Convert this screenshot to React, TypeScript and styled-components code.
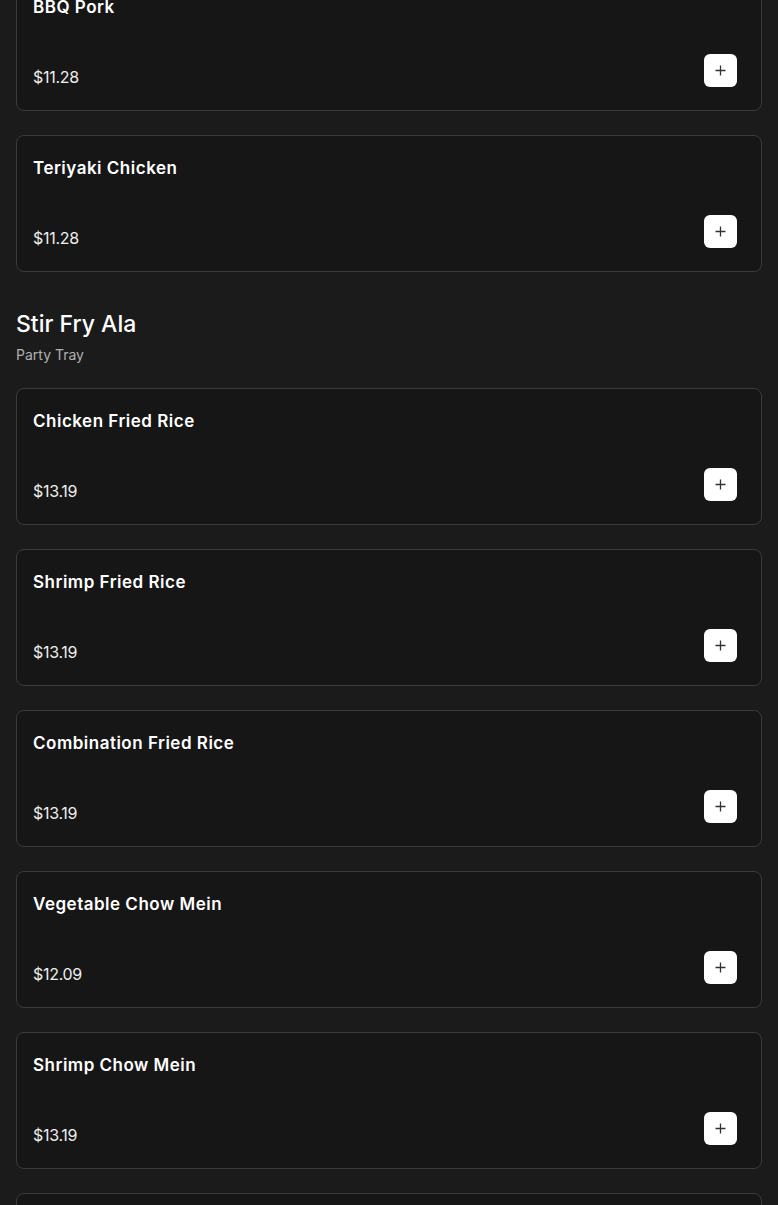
import React from "react";
import styled, { createGlobalStyle } from "styled-components";

const Global = createGlobalStyle`
  html, body { margin: 0; padding: 0; background: #1b1b1b; }
  body { font-family: "Inter", "Noto Sans", sans-serif; color: #fff; overflow: hidden; }
`;

const Page = styled.div`
  padding: 0 16px;
  display: flex;
  flex-direction: column;
  gap: 24px;
  margin-top: -26px;
`;

const Card = styled.div`
  background: #161616;
  border: 1px solid #3b3b3b;
  border-radius: 8px;
  padding: 16px 24px 23px 16px;
  display: flex;
  flex-direction: column;
`;

const Title = styled.div`
  font-size: 17px;
  font-weight: 600;
  line-height: 24px;
  letter-spacing: 0.5px;
  margin-top: 4px;
  color: #fff;
`;

const Row = styled.div`
  margin-top: 35px;
  display: flex;
  align-items: flex-end;
  justify-content: space-between;
`;

const Price = styled.div`
  font-size: 16px;
  line-height: 19px;
  letter-spacing: -0.3px;
  color: #eee;
`;

const AddButton = styled.button`
  width: 33px;
  height: 33px;
  border: none;
  border-radius: 6px;
  background: #fff;
  display: flex;
  align-items: center;
  justify-content: center;
  padding: 0;
  cursor: pointer;
`;

const Section = styled.div`
  padding-top: 12px;
  display: flex;
  flex-direction: column;
`;

const SectionTitle = styled.div`
  font-size: 23px;
  line-height: 32px;
  font-weight: 500;
  color: #fff;
`;

const SectionSub = styled.div`
  font-size: 14px;
  line-height: 19px;
  margin-top: 5px;
  color: #b0b0b0;
`;

const Plus = () => (
  <svg width="11" height="11" viewBox="0 0 11 11">
    <path d="M5.5 0.5v10M0.5 5.5h10" stroke="#333" strokeWidth="1.3" />
  </svg>
);

const Item = ({ name, price }: { name: string; price: string }) => (
  <Card>
    <Title>{name}</Title>
    <Row>
      <Price>{price}</Price>
      <AddButton aria-label="add">
        <Plus />
      </AddButton>
    </Row>
  </Card>
);

export default function App() {
  return (
    <>
      <Global />
      <Page>
        <Item name="BBQ Pork" price="$11.28" />
        <Item name="Teriyaki Chicken" price="$11.28" />
        <Section>
          <SectionTitle>Stir Fry Ala</SectionTitle>
          <SectionSub>Party Tray</SectionSub>
        </Section>
        <Item name="Chicken Fried Rice" price="$13.19" />
        <Item name="Shrimp Fried Rice" price="$13.19" />
        <Item name="Combination Fried Rice" price="$13.19" />
        <Item name="Vegetable Chow Mein" price="$12.09" />
        <Item name="Shrimp Chow Mein" price="$13.19" />
        <Item name="Beef Chow Mein" price="$13.19" />
      </Page>
    </>
  );
}
